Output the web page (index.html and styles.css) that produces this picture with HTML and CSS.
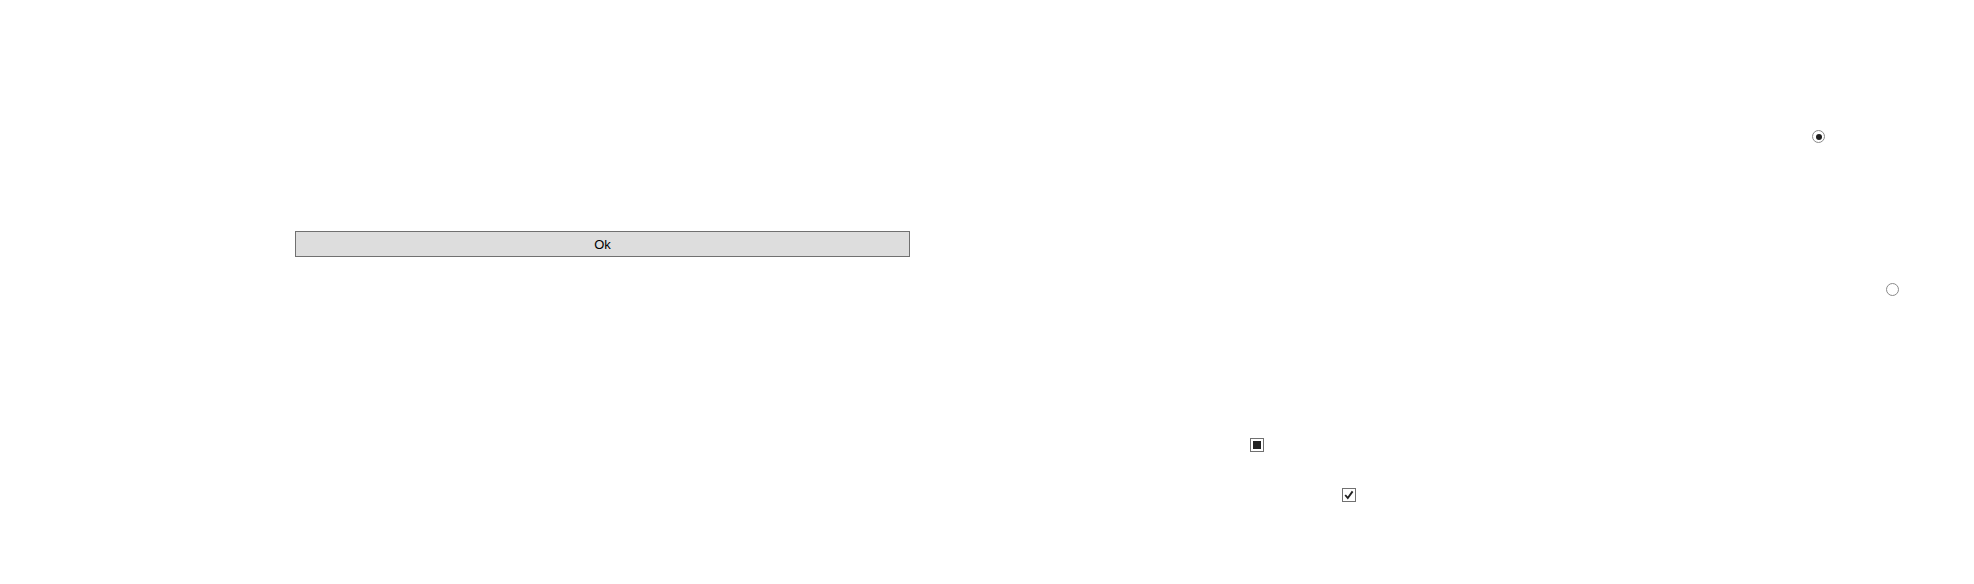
FILE: index.html
```html
<!DOCTYPE html>
<html>
<head>
<meta charset="utf-8">
<link rel="stylesheet" href="styles.css">
</head>
<body>
<main class="canvas">
  <span class="radio radio-a checked" role="radio" aria-checked="true"></span>
  <button class="btn">Ok</button>
  <span class="radio radio-b" role="radio" aria-checked="false"></span>
  <span class="check check-a indeterminate" role="checkbox" aria-checked="mixed"></span>
  <span class="check check-b" role="checkbox" aria-checked="true">
    <svg viewBox="0 0 14 14" width="14" height="14"><path d="M3.2 7 L5.8 10 L10.6 3.4" fill="none" stroke="#222" stroke-width="1.9"/></svg>
  </span>
</main>
</body>
</html>
```
FILE: styles.css
```css
html, body {
  margin: 0;
  padding: 0;
  background: #ffffff;
}
.canvas {
  display: flex;
  flex-direction: column;
  align-items: flex-start;
  width: 1974px;
  height: 584px;
  font-family: "Liberation Sans", Arial, sans-serif;
}
.radio {
  box-sizing: border-box;
  display: flex;
  align-items: center;
  justify-content: center;
  width: 13px;
  height: 13px;
  border: 1px solid #8a8a8a;
  border-radius: 50%;
  background: #fff;
}
.radio.checked::after {
  content: "";
  width: 6px;
  height: 6px;
  border-radius: 50%;
  background: #1f1f1f;
}
.radio-a {
  margin: 130px 0 0 1812px;
}
.btn {
  box-sizing: border-box;
  margin: 88px 0 0 295px;
  width: 615px;
  height: 26px;
  padding: 0;
  border: 1px solid #707070;
  background: #dddddd;
  color: #000;
  font-family: "Liberation Sans", Arial, sans-serif;
  font-size: 13px;
}
.radio-b {
  margin: 26px 0 0 1886px;
}
.check {
  box-sizing: border-box;
  display: flex;
  align-items: center;
  justify-content: center;
  width: 14px;
  height: 14px;
  border: 1px solid #707070;
  background: #fff;
}
.check svg {
  display: block;
  flex: none;
}
.check.indeterminate::after {
  content: "";
  width: 8px;
  height: 8px;
  background: #222;
}
.check-a {
  margin: 142px 0 0 1250px;
}
.check-b {
  margin: 36px 0 0 1342px;
}
```
